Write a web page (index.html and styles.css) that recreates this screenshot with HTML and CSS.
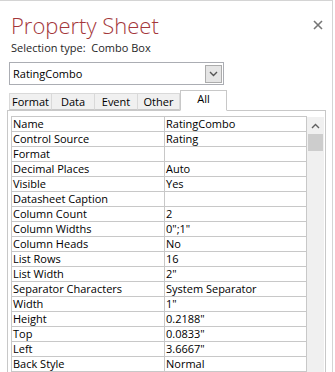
FILE: index.html
```html
<!DOCTYPE html>
<html lang="en">
<head>
    <meta charset="UTF-8">
    <title>Property Sheet</title>
    <link rel="stylesheet" href="styles.css">
</head>
<body>
<div class="sheet">
    <div class="head">
        <h1 class="title">Property Sheet</h1>
        <svg class="close" width="10" height="10" viewBox="0 0 10 10">
            <path d="M1 1L9 9M9 1L1 9" stroke="#767676" stroke-width="1.6" fill="none"/>
        </svg>
    </div>
    <div class="sel">Selection type:&nbsp; Combo Box</div>
    <div class="combo">
        <span class="combo-text">RatingCombo</span>
        <span class="drop">
            <svg width="9" height="6" viewBox="0 0 9 6"><path d="M1 1L4.5 4.5L8 1" stroke="#555" stroke-width="1.4" fill="none"/></svg>
        </span>
    </div>
    <div class="tabs">
        <span class="tab t-format">Format</span>
        <span class="tab t-data">Data</span>
        <span class="tab t-event">Event</span>
        <span class="tab t-other">Other</span>
        <span class="tab active">All</span>
    </div>
    <div class="panel">
        <div class="grid">
            <div class="rows">
                <div class="row"><span class="k">Name</span><span class="v">RatingCombo</span></div>
                <div class="row"><span class="k">Control Source</span><span class="v">Rating</span></div>
                <div class="row"><span class="k">Format</span><span class="v"></span></div>
                <div class="row"><span class="k">Decimal Places</span><span class="v">Auto</span></div>
                <div class="row"><span class="k">Visible</span><span class="v">Yes</span></div>
                <div class="row"><span class="k">Datasheet Caption</span><span class="v"></span></div>
                <div class="row"><span class="k">Column Count</span><span class="v">2</span></div>
                <div class="row"><span class="k">Column Widths</span><span class="v">0";1"</span></div>
                <div class="row"><span class="k">Column Heads</span><span class="v">No</span></div>
                <div class="row"><span class="k">List Rows</span><span class="v">16</span></div>
                <div class="row"><span class="k">List Width</span><span class="v">2"</span></div>
                <div class="row"><span class="k">Separator Characters</span><span class="v">System Separator</span></div>
                <div class="row"><span class="k">Width</span><span class="v">1"</span></div>
                <div class="row"><span class="k">Height</span><span class="v">0.2188"</span></div>
                <div class="row"><span class="k">Top</span><span class="v">0.0833"</span></div>
                <div class="row"><span class="k">Left</span><span class="v">3.6667"</span></div>
                <div class="row"><span class="k">Back Style</span><span class="v">Normal</span></div>
            </div>
            <div class="scroll">
                <div class="up">
                    <svg width="9" height="6" viewBox="0 0 9 6"><path d="M1 5L4.5 1.5L8 5" stroke="#606060" stroke-width="1.4" fill="none"/></svg>
                </div>
                <div class="thumb"></div>
            </div>
        </div>
    </div>
</div>
</body>
</html>
```
FILE: styles.css
```css
html, body {
    margin: 0;
    padding: 0;
    background: #fff;
}

body {
    font-family: "Open Sans", "Noto Sans", sans-serif;
    font-size: 11px;
    color: #000;
    overflow: hidden;
}

.sheet {
    width: 333px;
    height: 372px;
    box-sizing: border-box;
    border-top: 1px solid #d4d4d4;
    border-right: 1px solid #d4d4d4;
    overflow: hidden;
}

.head {
    display: flex;
    justify-content: space-between;
    align-items: center;
    padding: 9px 9px 0 11px;
    height: 30px;
}

.title {
    margin: 0;
    font-size: 22px;
    font-weight: 300;
    color: #a4373a;
    line-height: 30px;
}

.sel {
    padding-left: 11px;
    line-height: 16px;
    color: #262626;
}

.combo {
    display: flex;
    align-items: center;
    justify-content: space-between;
    margin: 6px 0 0 9px;
    width: 215px;
    height: 23px;
    box-sizing: border-box;
    border: 1px solid #abadb3;
    padding: 0 1px 0 3px;
}

.drop {
    display: flex;
    align-items: center;
    justify-content: center;
    width: 17px;
    height: 18px;
    box-sizing: border-box;
    border: 1px solid #acacac;
    background: #e5e5e5;
}

.tabs {
    display: flex;
    align-items: flex-end;
    margin: 5px 0 0 9px;
    height: 20px;
    position: relative;
    z-index: 1;
}

.tab {
    height: 17px;
    box-sizing: border-box;
    border: 1px solid #d9d9d9;
    border-bottom: 1px solid #c8c8c8;
    background: #f0f0f0;
    text-align: center;
    line-height: 15px;
}

.t-format { width: 43px; }
.t-data { width: 43px; border-left: none; }
.t-event { width: 43px; border-left: none; }
.t-other { width: 42px; border-left: none; }

.tab.active {
    width: 47px;
    height: 21px;
    margin-bottom: -1px;
    background: #fff;
    border-color: #c8c8c8;
    border-bottom: 1px solid #fff;
    line-height: 15px;
}

.panel {
    margin-left: 7px;
    width: 319px;
    height: 263px;
    box-sizing: border-box;
    border: 1px solid #c8c8c8;
    border-bottom: none;
    padding: 5px 0 0 3px;
}

.grid {
    display: flex;
    align-items: flex-start;
}

.rows {
    width: 296px;
    box-sizing: border-box;
    border: 1px solid #c8c8c8;
    border-bottom: none;
}

.row {
    display: grid;
    grid-template-columns: 153px 1fr;
    height: 15px;
    box-sizing: border-box;
    border-bottom: 1px solid #c8c8c8;
    line-height: 14px;
}

.k {
    padding-left: 1px;
    border-right: 1px solid #c8c8c8;
    white-space: nowrap;
}

.v {
    padding-left: 1px;
    white-space: nowrap;
}

.scroll {
    width: 17px;
    height: 257px;
    margin-top: 1px;
    background: #f0f0f0;
}

.up {
    height: 17px;
    display: flex;
    align-items: center;
    justify-content: center;
}

.thumb {
    height: 17px;
    margin: 0 1px;
    background: #cdcdcd;
}
```
